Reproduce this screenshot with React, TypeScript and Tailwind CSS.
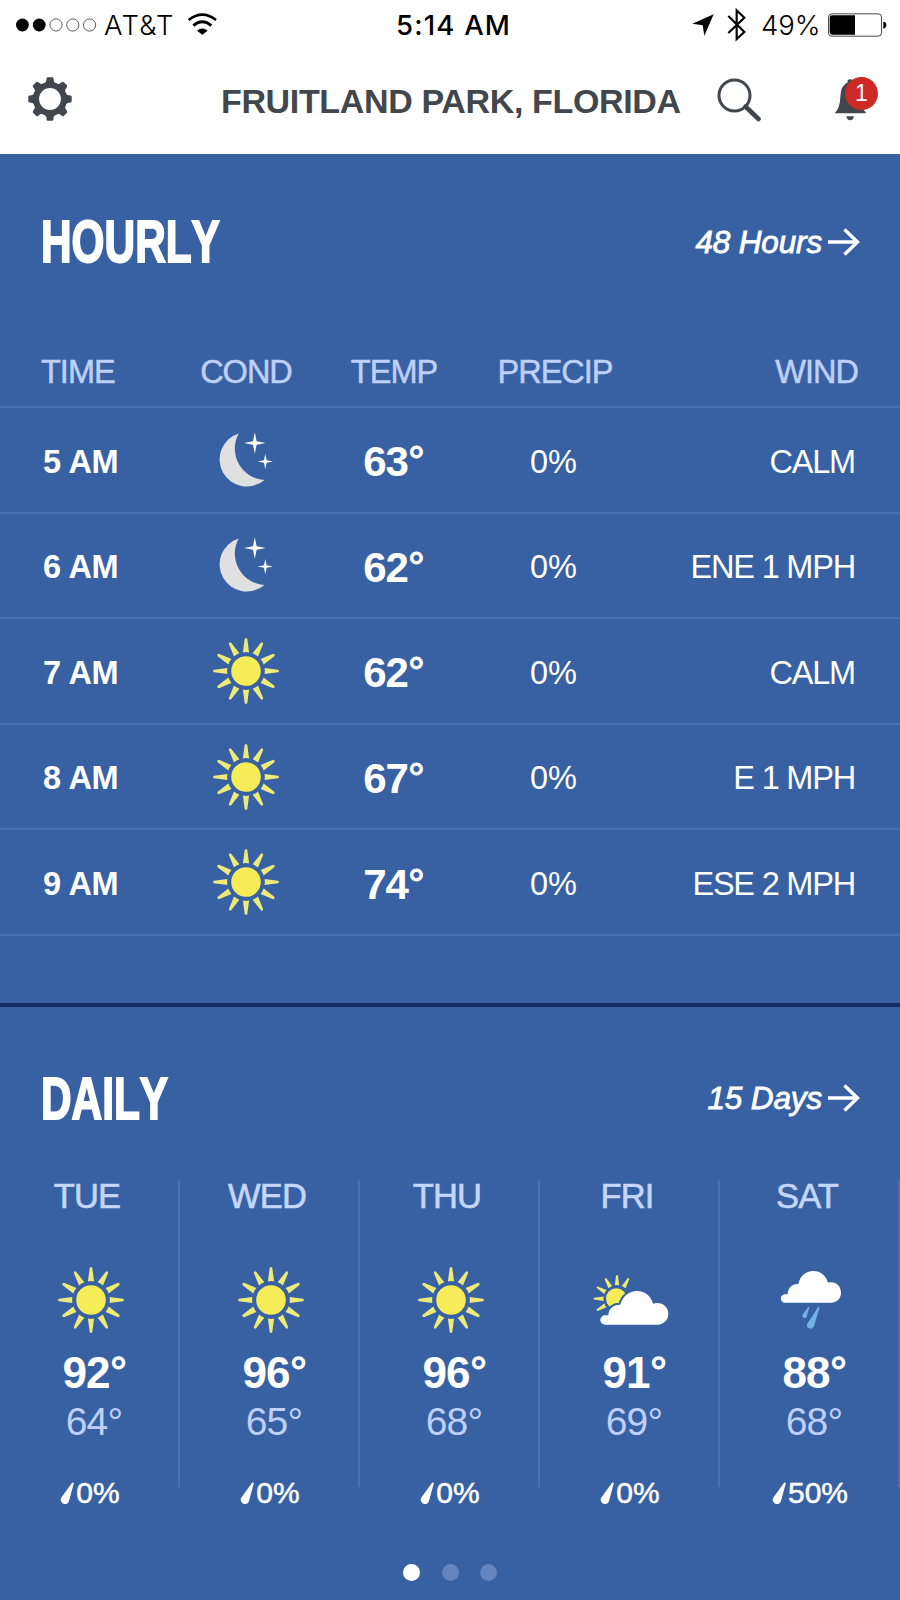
import React from 'react';

const hours = [
	{ time: '5 AM', icon: 'moon', temp: 63, precip: '0%', wind: 'CALM' },
	{ time: '6 AM', icon: 'moon', temp: 62, precip: '0%', wind: 'ENE 1 MPH' },
	{ time: '7 AM', icon: 'sun', temp: 62, precip: '0%', wind: 'CALM' },
	{ time: '8 AM', icon: 'sun', temp: 67, precip: '0%', wind: 'E 1 MPH' },
	{ time: '9 AM', icon: 'sun', temp: 74, precip: '0%', wind: 'ESE 2 MPH' },
];

const days = [
	{ day: 'TUE', icon: 'sun', high: 92, low: 64, precip: '0%' },
	{ day: 'WED', icon: 'sun', high: 96, low: 65, precip: '0%' },
	{ day: 'THU', icon: 'sun', high: 96, low: 68, precip: '0%' },
	{ day: 'FRI', icon: 'partly', high: 91, low: 69, precip: '0%' },
	{ day: 'SAT', icon: 'rain', high: 88, low: 68, precip: '50%' },
];

function Rays({ angles }: { angles: number[] }) {
	return (
		<g fill="#eeea78">
			{angles.map((angle) => (
				<path
					key={angle}
					d="M-3.1 -18.6 L-1.3 -32 Q0 -34 1.3 -32 L3.1 -18.6 Q0 -19.2 -3.1 -18.6Z"
					transform={`rotate(${angle})`}
				/>
			))}
		</g>
	);
}

function Sun() {
	return (
		<svg width="68" height="68" viewBox="-34 -34 68 68">
			<Rays angles={[0, 30, 60, 90, 120, 150, 180, 210, 240, 270, 300, 330]} />
			<circle r="14.8" fill="#f5ec58" />
		</svg>
	);
}

function Moon() {
	return (
		<svg width="56" height="56" viewBox="219 432 56 56">
			<path
				d="M239.7 433.4A27.2 27.2 0 1 0 265.5 480A31.5 31.5 0 0 1 239.7 433.4Z"
				fill="#e0e0e2"
			/>
			<path
				d="M255.8 432.2L257.6 441.2L266.6 443L257.6 444.8L255.8 453.8L254 444.8L245 443L254 441.2Z"
				fill="#fff"
			/>
			<path
				d="M266.3 454L267.6 460.2L273.8 461.5L267.6 462.8L266.3 469.2L265 462.8L258.8 461.5L265 460.2Z"
				fill="#fff"
			/>
		</svg>
	);
}

function PartlyCloudy() {
	return (
		<svg width="78" height="56" viewBox="95 96 234 168">
			<g transform="translate(170 176) scale(2.15)">
				<Rays angles={[240, 270, 300, 330, 0, 30]} />
			</g>
			<circle cx="168" cy="176" r="31" fill="#f5ec58" />
			<path
				d="M134 254A14 14 0 0 1 134 226H144C144 206 160 193 180 194C186 170 206 153 230 153C254 153 272 168 278 191C304 184 324 200 324 222C324 240 310 254 292 254Z"
				fill="#fff"
				stroke="#3861a4"
				strokeWidth="12"
				paintOrder="stroke"
			/>
		</svg>
	);
}

function Rain() {
	return (
		<svg width="62" height="60" viewBox="658 90 186 180">
			<path
				d="M673 188A12.500 12.500 0 0 1 673 163H681C681 144 694 131 713 132C718 108 736 93 757 93C779 93 797 107 802 128C824 122 841 138 841 158C841 175 828 188 811 188Z"
				fill="#fff"
			/>
			<path d="M743 200L726 224A6.500 6.500 0 1 0 738 230L746 201Z" fill="#74b3e6" />
			<path d="M773 200L740 251A10.500 10.500 0 1 0 760 259L777 201Z" fill="#74b3e6" />
		</svg>
	);
}

function Drop() {
	return (
		<svg className="mr-[2px]" width="14" height="23" viewBox="0 0 14 23">
			<path d="M12.300 .5L1.200 15.800A4.200 4.200 0 1 0 8.800 19.800L13.900 1Z" fill="#fff" />
		</svg>
	);
}

function Condition({ icon }: { icon: string }) {
	if (icon === 'moon') return <Moon />;
	if (icon === 'partly') return <PartlyCloudy />;
	if (icon === 'rain') return <Rain />;
	return <Sun />;
}

function StatusBar() {
	return (
		<div className="grid grid-cols-[397px_1fr_auto] items-center h-[50px] pl-4 pr-[13px] font-['Inter',sans-serif] text-[27.500px] leading-none text-black">
			<div className="flex items-center">
				<svg width="82" height="14" viewBox="0 0 82 14">
					<circle cx="6.400" cy="7" r="6.400" />
					<circle cx="23.200" cy="7" r="6.400" />
					<circle cx="40" cy="7" r="6.100" fill="none" stroke="#333" strokeWidth="0.800" />
					<circle cx="56.800" cy="7" r="6.100" fill="none" stroke="#333" strokeWidth="0.800" />
					<circle cx="73.600" cy="7" r="6.100" fill="none" stroke="#333" strokeWidth="0.800" />
				</svg>
				<span className="mt-[2px] ml-[6px] w-[82px] font-light tracking-[1.200px]">AT&amp;T</span>
				<svg className="-mt-[3px] ml-[1px]" width="30" height="22" viewBox="560 37 90 66">
					<g fill="none" stroke="#000" strokeWidth="8.500">
						<path d="M565 58Q606 26 647 58" />
						<path d="M579 75Q606 52 633 75" />
					</g>
					<path d="M590 90Q606 77 622 90L606 102Z" />
				</svg>
			</div>
			<span className="mt-[2px] -ml-[17px] font-medium tracking-[1.200px]">5:14 AM</span>
			<div className="flex items-center">
				<svg width="22" height="22" viewBox="94 42 66 66">
					<path d="M95 71L159 43L131 107L126 76Z" />
				</svg>
				<svg className="ml-[13px]" width="20" height="34" viewBox="200 23 60 102">
					<path
						d="M204 47L252 95L229 116V30L252 52L204 98"
						fill="none"
						stroke="#000"
						strokeWidth="6.500"
					/>
				</svg>
				<span className="mt-[2px] ml-[14px] w-[67px] font-light">49%</span>
				<svg width="59" height="24" viewBox="504 37 177 72">
					<rect x="505.500" y="39.500" width="159" height="67" rx="10" fill="none" stroke="#222" strokeWidth="2.500" />
					<path d="M585 44V102H516Q509 102 509 95V51Q509 44 516 44Z" />
					<path d="M670 63Q679 64 679 73Q679 82 670 84Z" />
				</svg>
			</div>
		</div>
	);
}

function TitleBar() {
	return (
		<header className="flex items-center h-[103.500px] pl-[28px] pb-[1px] text-[#41474c]">
			<svg className="-mt-[4px]" width="44" height="44" viewBox="-22 -22 44 44">
				<circle r="14" fill="none" stroke="#41474c" strokeWidth="6.200" />
				{[0, 45, 90, 135, 180, 225, 270, 315].map((angle) => (
					<path
						key={angle}
						d="M-5.500 -15.500Q-3.500 -17 -3.500 -20.500Q-3.300 -21.700 -2 -21.700H2Q3.300 -21.700 3.500 -20.500Q3.500 -17 5.500 -15.500Z"
						fill="#41474c"
						transform={`rotate(${angle})`}
					/>
				))}
			</svg>
			<h1 className="ml-[149px] w-[496px] text-[34px] leading-none font-bold tracking-[-0.350px] whitespace-nowrap">
				FRUITLAND PARK, FLORIDA
			</h1>
			<svg className="-mt-[3px]" width="44" height="44" viewBox="0 0 44 44" fill="none" stroke="#41474c">
				<circle cx="17.500" cy="17.500" r="15.500" strokeWidth="3" />
				<path d="M28.500 28.500L41.500 41" strokeWidth="4.600" strokeLinecap="round" />
			</svg>
			<div className="relative ml-[73px] -mt-[2px]">
				<svg width="34" height="42" viewBox="521 235 102 126" fill="#41474c">
					<path d="M523 338Q539 322 540 290Q541 254 562 245V238Q570 234 578 238V245Q600 252 601 290Q602 322 618 338Z" />
					<path d="M558 347H581Q579 359 569.500 359Q560 359 558 347Z" />
				</svg>
				<span className="absolute left-[11px] -top-[2px] flex items-center justify-center size-[33px] rounded-full bg-[#cd2a27] text-[23px] leading-none text-white">
					1
				</span>
			</div>
		</header>
	);
}

function SectionHeading({ title, link }: { title: string; link: string }) {
	return (
		<div className="flex items-center justify-between h-[60px] pl-[41px] pr-[40px] text-white">
			<h2 className="mt-[1px] origin-left scale-x-[0.706] text-[60px] leading-none font-bold [font-kerning:none] [-webkit-text-stroke:2px_white]">
				{title}
			</h2>
			<a className="flex items-center gap-[5px] text-[31.500px] leading-none tracking-[-0.150px] italic [-webkit-text-stroke:0.800px_white]">
				<span className="pt-[2px]">{link}</span>
				<svg width="33" height="28" viewBox="0 0 33 28" fill="none" stroke="#fff" strokeWidth="3.400">
					<path d="M1 14H30M17.500 1.500L30.500 14L17.500 26.500" />
				</svg>
			</a>
		</div>
	);
}

function Hourly() {
	return (
		<section className="h-[853.500px] pt-[58px] border-b-4 border-[#152b66]">
			<SectionHeading title="HOURLY" link="48 Hours" />
			<div className="grid grid-cols-[131px_148px_148px_174px_1fr] items-center h-[136.500px] pt-[66px] pl-[41px] pr-[42px] border-b-2 border-[#4970b5] text-[32.500px] leading-none tracking-[-1px] text-center text-[#bdd0f8] [-webkit-text-stroke:0.500px_#bdd0f8]">
				<span className="text-left">TIME</span>
				<span>COND</span>
				<span>TEMP</span>
				<span>PRECIP</span>
				<span className="text-right">WIND</span>
			</div>
			{hours.map((hour) => (
				<div
					key={hour.time}
					className="grid grid-cols-[129px_148px_147px_173px_1fr] items-center h-[105.600px] pl-[43px] pr-[45px] border-b-2 border-[#4970b5] text-[32.500px] leading-none text-center text-white"
				>
					<span className="pt-[4px] text-left font-bold tracking-[-0.250px]">{hour.time}</span>
					<span className="flex justify-center">
						<Condition icon={hour.icon} />
					</span>
					<span className="pt-[5px] text-[42px] font-bold tracking-[-1px]">
						{hour.temp}
						<span className="font-normal [-webkit-text-stroke:1px_white]">°</span>
					</span>
					<span className="pt-[4px]">{hour.precip}</span>
					<span className="pt-[4px] text-right tracking-[-1.200px]">{hour.wind}</span>
				</div>
			))}
		</section>
	);
}

function Daily() {
	return (
		<section className="pt-[61px]">
			<SectionHeading title="DAILY" link="15 Days" />
			<div className="grid grid-cols-5 mt-[52px]">
				{days.map((item) => (
					<div
						key={item.day}
						className="flex flex-col items-center h-[307px] border-r-2 border-[#4970b5] leading-none whitespace-nowrap"
					>
						<span className="mr-1 h-[32px] text-[34.500px] leading-[32px] tracking-[-0.800px] text-[#c4d6fa] [-webkit-text-stroke:0.600px_#c4d6fa]">
							{item.day}
						</span>
						<div className="flex shrink-0 items-center h-[68px] mt-[54px] ml-[3px]">
							<Condition icon={item.icon} />
						</div>
						<span className="mt-[17px] ml-[11px] text-[44px] font-bold tracking-[-0.800px] text-white">
							{item.high}
							<span className="font-normal [-webkit-text-stroke:1px_white]">°</span>
						</span>
						<span className="mt-[7px] ml-[10px] text-[39px] tracking-[-0.800px] text-[#bdd0fb]">{item.low}°</span>
						<span className="flex items-center mt-[37px] ml-[2px] text-[30px] text-white [-webkit-text-stroke:0.500px_white]">
							<Drop />
							{item.precip}
						</span>
					</div>
				))}
			</div>
			<div className="flex justify-center gap-[21.500px] mt-[77px]">
				<span className="size-[17px] rounded-full bg-white" />
				<span className="size-[17px] rounded-full bg-[#6384bf]" />
				<span className="size-[17px] rounded-full bg-[#6384bf]" />
			</div>
		</section>
	);
}

export default function App() {
	return (
		<div className="w-[900px] h-[1600px] overflow-hidden bg-white font-['Liberation_Sans',Arial,sans-serif]">
			<StatusBar />
			<TitleBar />
			<main className="h-[1447px] bg-[#3861a4]">
				<Hourly />
				<Daily />
			</main>
		</div>
	);
}
